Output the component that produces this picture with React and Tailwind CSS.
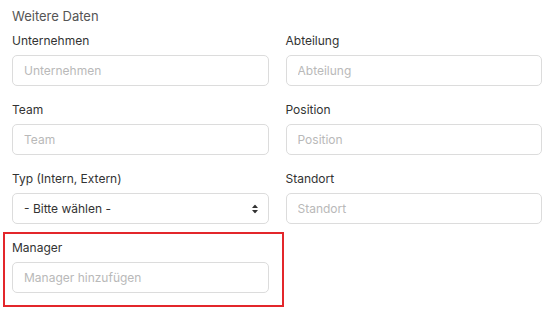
import { useState } from "react";

function Field({ label, placeholder }) {
  return (
    <div className="flex flex-col">
      <label className="text-[12px] leading-4 text-[#333] mb-[6px]">{label}</label>
      <input
        type="text"
        placeholder={placeholder}
        className="h-[31px] w-full rounded-[5px] border border-[#dcdcdc] bg-white px-[11px] text-[12px] text-[#333] placeholder:text-[#b9b9b9] outline-none"
      />
    </div>
  );
}

export default function App() {
  const [typ, setTyp] = useState("");

  return (
    <div className="min-h-screen bg-white px-3 pt-[6px] font-['Inter',sans-serif]">
      <h2 className="text-[13px] leading-5 text-[#555] mb-[7px]">Weitere Daten</h2>

      <div className="grid grid-cols-2 gap-x-[17px] gap-y-4">
        <Field label="Unternehmen" placeholder="Unternehmen" />
        <Field label="Abteilung" placeholder="Abteilung" />
        <Field label="Team" placeholder="Team" />
        <Field label="Position" placeholder="Position" />

        <div className="flex flex-col">
          <label className="text-[12px] leading-4 text-[#333] mb-[6px]">Typ (Intern, Extern)</label>
          <div className="relative">
            <select
              value={typ}
              onChange={(e) => setTyp(e.target.value)}
              className="h-[31px] w-full appearance-none rounded-[5px] border border-[#dcdcdc] bg-white px-[11px] text-[12px] text-[#333] outline-none"
            >
              <option value="">- Bitte wählen -</option>
              <option value="intern">Intern</option>
              <option value="extern">Extern</option>
            </select>
            <svg
              className="pointer-events-none absolute right-[11px] top-1/2 -translate-y-1/2"
              width="6"
              height="9"
              viewBox="0 0 6 9"
            >
              <path d="M3 0L6 3.5H0Z" fill="#333" />
              <path d="M3 9L0 5.5H6Z" fill="#333" />
            </svg>
          </div>
        </div>
        <Field label="Standort" placeholder="Standort" />

        <div className="relative">
          <Field label="Manager" placeholder="Manager hinzufügen" />
          <div className="pointer-events-none absolute -left-[9px] -right-[15px] -top-[8px] -bottom-[14px] border-2 border-[#e3262b]" />
        </div>
      </div>
    </div>
  );
}
